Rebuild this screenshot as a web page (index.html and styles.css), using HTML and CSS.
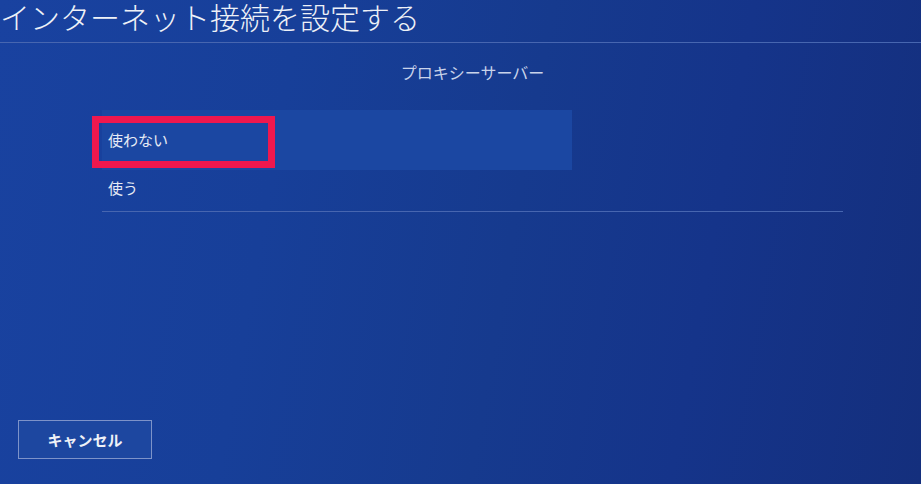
FILE: index.html
```html
<!DOCTYPE html>
<html lang="ja">
<head>
    <meta charset="UTF-8">
    <meta name="viewport" content="width=device-width, initial-scale=1.0">
    <title>インターネット接続を設定する</title>
    <link rel="stylesheet" href="styles.css">
</head>
<body>
    <div class="screen">
        <header class="title-bar">
            <h1>インターネット接続を設定する</h1>
        </header>

        <main class="content">
            <h2 class="subtitle">プロキシーサーバー</h2>

            <ul class="options">
                <li class="option selected">
                    <span>使わない</span>
                    <!-- annotation frame drawn over the focused item -->
                    <div class="marker"></div>
                </li>
                <li class="option last">
                    <span>使う</span>
                </li>
            </ul>
        </main>

        <footer class="footer">
            <button class="cancel">キャンセル</button>
        </footer>
    </div>
</body>
</html>
```

FILE: styles.css
```css
:root {
    --text-color: #e6ebf5;
    --muted-text: #c9d3ea;
    --line-color: #4766b0;
    --highlight: #1b47a2;
    --marker: #ef184e;
}

* {
    box-sizing: border-box;
}

body {
    margin: 0;
    font-family: "Noto Sans CJK JP", "Noto Sans", sans-serif;
    color: var(--text-color);
}

.screen {
    width: 921px;
    height: 484px;
    display: flex;
    flex-direction: column;
    overflow: hidden;
    background: linear-gradient(100deg, #1942a0 0%, #173f99 30%, #163a8e 55%, #15348a 75%, #142f7d 100%);
}

.title-bar {
    height: 43px;
    border-bottom: 1px solid var(--line-color);
}

.title-bar h1 {
    margin: 0;
    font-size: 30px;
    font-weight: 300;
    line-height: 32px;
    color: #eef1f7;
}

.content {
    margin-left: 102px;
    width: 741px;
}

.subtitle {
    margin: 19px 0 28px;
    text-align: center;
    font-size: 16px;
    font-weight: 400;
    line-height: 20px;
    color: var(--muted-text);
}

.options {
    list-style: none;
    margin: 0;
    padding: 0;
}

.option {
    position: relative;
    padding-left: 6px;
    font-size: 15px;
    line-height: 20px;
}

.option.selected {
    width: 470px;
    height: 60px;
    display: flex;
    align-items: center;
    background: var(--highlight);
}

.option.last {
    height: 42px;
    padding-top: 8px;
    border-bottom: 1px solid var(--line-color);
}

.marker {
    position: absolute;
    left: -10px;
    top: 6px;
    width: 183px;
    height: 52px;
    border: 7px solid var(--marker);
}

.footer {
    margin-top: auto;
    padding: 0 0 25px 18px;
}

.cancel {
    width: 134px;
    height: 39px;
    padding: 0;
    font-family: "Noto Sans CJK JP", "Noto Sans", sans-serif;
    font-size: 15px;
    font-weight: 700;
    color: #eef1f7;
    background: #1d47a0;
    border: 1px solid #7d93c9;
    border-radius: 0;
}
```
